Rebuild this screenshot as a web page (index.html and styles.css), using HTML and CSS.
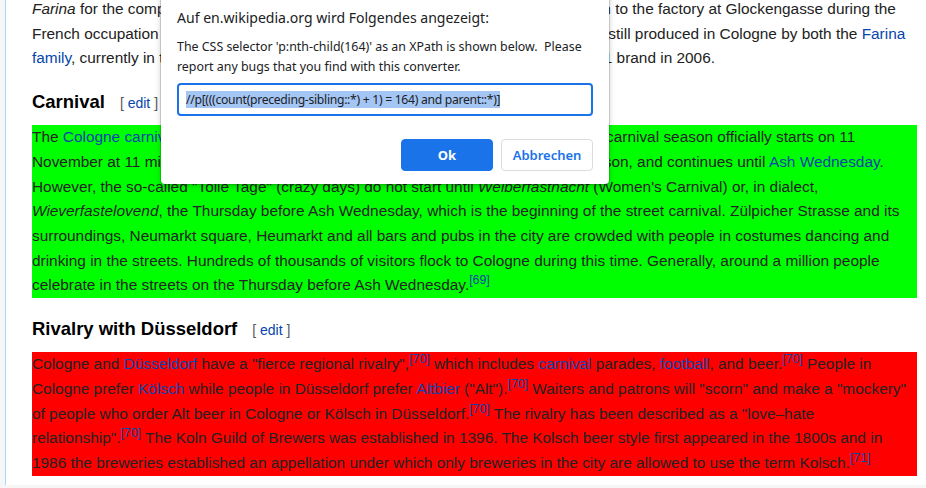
FILE: index.html
```html
<!DOCTYPE html>
<html lang="en">
<head>
<meta charset="utf-8">
<title>Cologne</title>
<link rel="stylesheet" href="styles.css">
</head>
<body>
<div class="page">
  <div class="content">
    <p class="intro"><i>Farina</i> for the company name and their product. Then chose the house number given to the factory at Glockengasse during the French occupation in the early 19th century, 4711. Today, original Eau de Cologne is still produced in Cologne by both the <a href="#">Farina family</a>, currently in the eighth generation, and by Mäurer &amp; Wirtz who bought the 4711 brand in 2006.</p>

    <h3><span class="hl">Carnival</span><span class="editsection">[ <a href="#">edit</a> ]</span></h3>
    <p class="mark-green">The <a href="#">Cologne carnival</a> is one of the largest street festivals in Europe. In Cologne, the carnival season officially starts on 11 November at 11 minutes past 11 a.m. with the proclamation of the new Carnival Season, and continues until <a href="#">Ash Wednesday</a>. However, the so-called "Tolle Tage" (crazy days) do not start until <i>Weiberfastnacht</i> (Women's Carnival) or, in dialect, <i>Wieverfastelovend</i>, the Thursday before Ash Wednesday, which is the beginning of the street carnival. Zülpicher Strasse and its surroundings, Neumarkt square, Heumarkt and all bars and pubs in the city are crowded with people in costumes dancing and drinking in the streets. Hundreds of thousands of visitors flock to Cologne during this time. Generally, around a million people celebrate in the streets on the Thursday before <span class="nw">Ash Wednesday.<sup class="ref"><a href="#">[69]</a></sup></span></p>

    <h3><span class="hl">Rivalry with Düsseldorf</span><span class="editsection">[ <a href="#">edit</a> ]</span></h3>
    <p class="mark-red">Cologne and <a href="#">Düsseldorf</a> have a "fierce regional <span class="nw">rivalry",<sup class="ref"><a href="#">[70]</a></sup></span> which includes <a href="#">carnival</a> parades, <a href="#">football</a>, and <span class="nw">beer.<sup class="ref"><a href="#">[70]</a></sup></span> People in Cologne prefer <a href="#">Kölsch</a> while people in Düsseldorf prefer <a href="#">Altbier</a> <span class="nw">("Alt").<sup class="ref"><a href="#">[70]</a></sup></span> Waiters and patrons will "scorn" and make a "mockery" of people who order Alt beer in Cologne or Kölsch in <span class="nw">Düsseldorf.<sup class="ref"><a href="#">[70]</a></sup></span> The rivalry has been described as a "love–hate <span class="nw">relationship".<sup class="ref"><a href="#">[70]</a></sup></span> The Koln Guild of Brewers was established in 1396. The Kolsch beer style first appeared in the 1800s and in 1986 the breweries established an appellation under which only breweries in the city are allowed to use the term <span class="nw">Kolsch.<sup class="ref"><a href="#">[71]</a></sup></span></p>
  </div>
</div>

<div class="dialog" role="alertdialog">
  <div class="dialog-title">Auf en.wikipedia.org wird Folgendes angezeigt:</div>
  <div class="dialog-msg">The CSS selector 'p:nth-child(164)' as an XPath is shown below.  Please<br>report any bugs that you find with this converter.</div>
  <div class="dialog-input"><span class="sel">//p[(((count(preceding-sibling::*) + 1) = 164) and parent::*)]</span></div>
  <div class="dialog-buttons">
    <button class="btn btn-primary">Ok</button>
    <button class="btn btn-secondary">Abbrechen</button>
  </div>
</div>
</body>
</html>
```

FILE: styles.css
```css
html, body {
  margin: 0;
  padding: 0;
}
body {
  background: #f6f6f6;
  font-family: "Liberation Sans", Arial, sans-serif;
  overflow: hidden;
  height: 488px;
}
.page {
  margin-left: 5px;
  background: #fff;
  border-left: 1px solid #a7d7f9;
  padding: 0 9px 0 26px;
  height: 488px;
}
.content {
  margin-top: -3px;
  color: #222;
}
p {
  margin: 0;
  font-size: 15.4px;
  line-height: 24.64px;
}
a {
  color: #0645ad;
  text-decoration: none;
}
h3 {
  margin: 16.3px 0 8.6px;
  font-size: 18.48px;
  line-height: 29.57px;
  font-weight: bold;
  color: #000;
}
.editsection {
  font-size: 14px;
  line-height: 1;
  font-weight: normal;
  color: #54595d;
  margin-left: 15px;
}
.mark-green {
  background: #00ff00;
}
.mark-red {
  background: #ff0000;
}
.nw {
  white-space: nowrap;
}
.ref {
  font-size: 0.8em;
  line-height: 1;
  vertical-align: super;
}

/* Browser alert dialog */
.dialog {
  position: absolute;
  left: 161px;
  top: -8px;
  width: 416px;
  padding: 16px 16px 13px;
  background: #fff;
  border-radius: 0 0 4px 4px;
  box-shadow: 0 0 0 1px rgba(0, 0, 0, 0.14), 0 2px 6px rgba(0, 0, 0, 0.22);
  font-family: "Noto Sans", "Open Sans", sans-serif;
  color: #202124;
}
.dialog-title {
  font-size: 14.05px;
  line-height: 20px;
}
.dialog-msg {
  margin-top: 9px;
  font-size: 12.4px;
  line-height: 20px;
  white-space: pre;
}
.dialog-input {
  margin-top: 6px;
  height: 29px;
  border: 2px solid #1a73e8;
  border-radius: 4px;
  padding: 0 7px;
  display: flex;
  align-items: center;
  font-size: 12.2px;
  letter-spacing: -0.3px;
}
.sel {
  background: #a4c6f5;
  line-height: 17px;
  white-space: nowrap;
}
.dialog-buttons {
  margin-top: 23px;
  display: flex;
  justify-content: flex-end;
  gap: 8px;
}
.btn {
  width: 92px;
  height: 32px;
  border-radius: 4px;
  font-family: "Noto Sans", "Open Sans", sans-serif;
  font-size: 13px;
  cursor: pointer;
}
.btn-primary {
  background: #1a73e8;
  border: 1px solid #1a73e8;
  color: #fff;
  font-weight: bold;
}
.btn-secondary {
  background: #fff;
  border: 1px solid #dadce0;
  color: #1a73e8;
  font-weight: 600;
}
```
